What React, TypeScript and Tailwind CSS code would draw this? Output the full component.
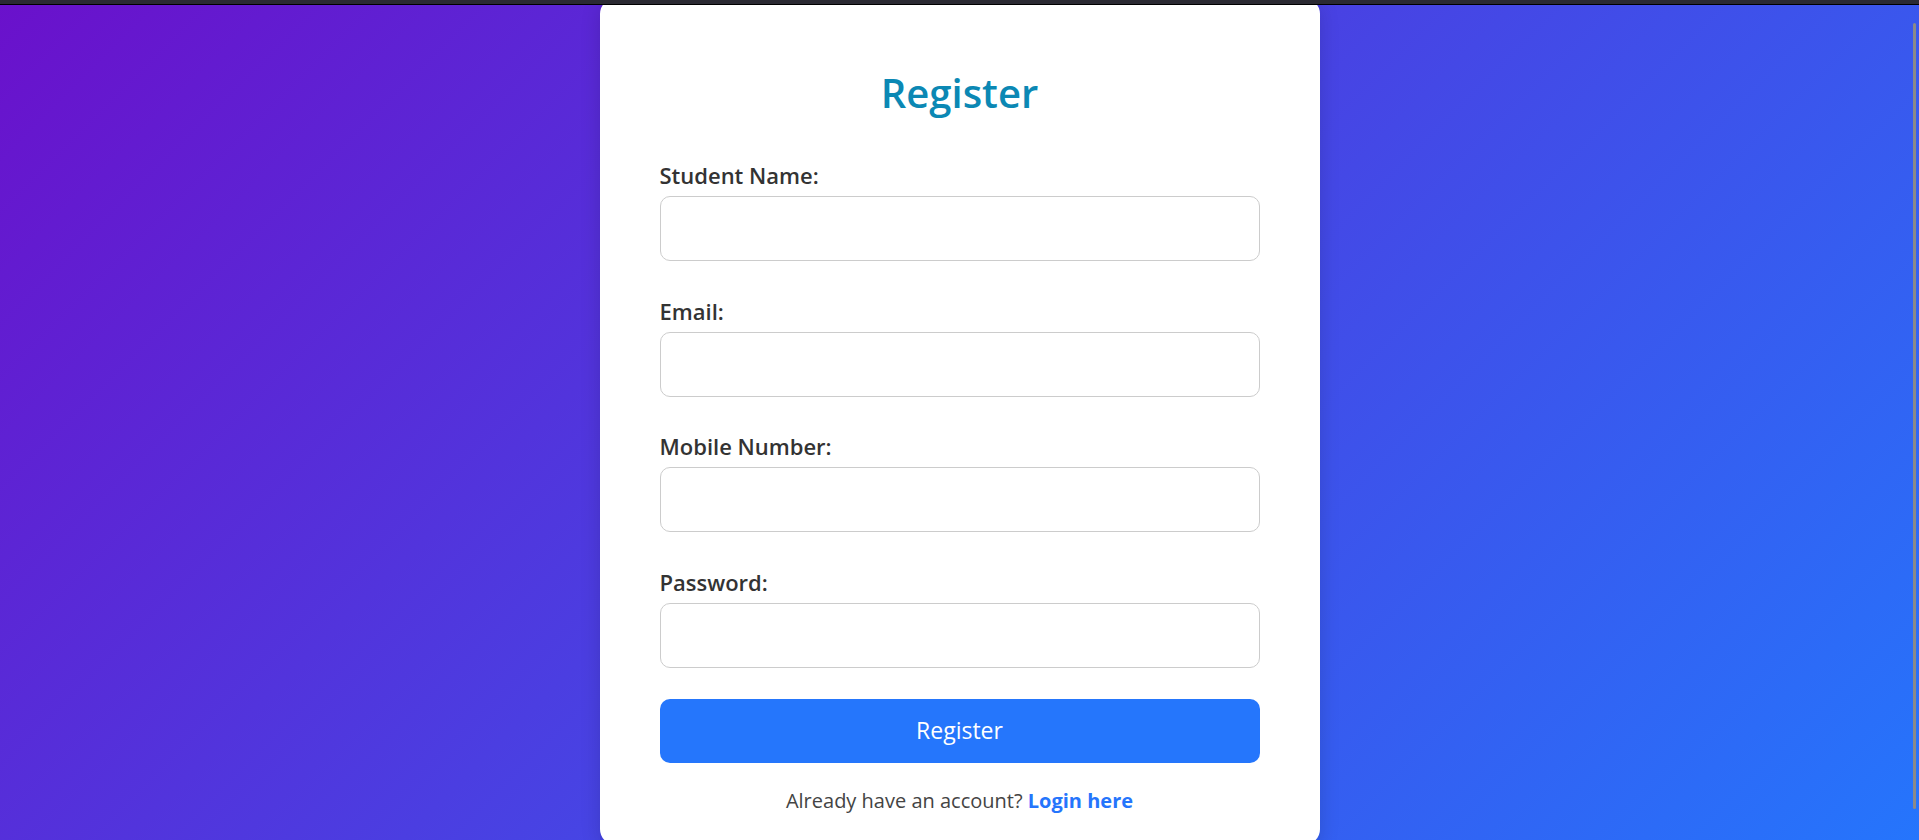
import React from 'react';

const fields = [
  { id: 'name', label: 'Student Name:', type: 'text' },
  { id: 'email', label: 'Email:', type: 'email' },
  { id: 'mobile', label: 'Mobile Number:', type: 'tel' },
  { id: 'password', label: 'Password:', type: 'password' },
];

const App: React.FC = () => {
  return (
    <div
      className="relative h-[840px] w-full overflow-hidden bg-[linear-gradient(135deg,#6a11cb_0%,#2575fc_100%)]"
      style={{ fontFamily: '"Open Sans", "Noto Sans", sans-serif' }}
    >
      {/* browser top strip */}
      <div className="relative z-10 h-[5px] border-b border-black bg-[#2b2a33]" />

      <div className="flex justify-center">
        <div className="-mt-[7px] h-[847px] w-[720px] rounded-[16px] bg-white px-[60px] pt-[71px] shadow-[0_4px_20px_rgba(0,0,0,0.15)]">
          <h1 className="mb-[45px] text-center text-[40px] leading-[48px] font-semibold text-[#0b88b4]">Register</h1>
          <form onSubmit={(e) => e.preventDefault()}>
            {fields.map((f, i) => (
              <div key={f.id} className={i === fields.length - 1 ? 'mb-[31px]' : 'mb-[36.5px]'}>
                <label htmlFor={f.id} className="mb-[8px] block text-[22px] leading-[26px] font-semibold text-[#333]">
                  {f.label}
                </label>
                <input
                  id={f.id}
                  type={f.type}
                  className="block h-[65px] w-full rounded-[10px] border border-[#ccc] bg-white px-[14px] text-[20px] outline-none"
                />
              </div>
            ))}
            <button
              type="submit"
              className="block h-[64px] w-full rounded-[10px] bg-[#2576fc] text-[23px] text-white"
            >
              Register
            </button>
          </form>
          <p className="mt-[25px] text-center text-[20px] leading-[26px] text-[#444]">
            Already have an account?{' '}
            <a href="#" className="font-bold text-[#2575fc]">Login here</a>
          </p>
        </div>
      </div>

      {/* overlay scrollbar */}
      <div className="absolute top-[23px] right-[3px] h-[786px] w-[3px] rounded-full bg-[#8a8a8a]" />
    </div>
  );
};

export default App;
